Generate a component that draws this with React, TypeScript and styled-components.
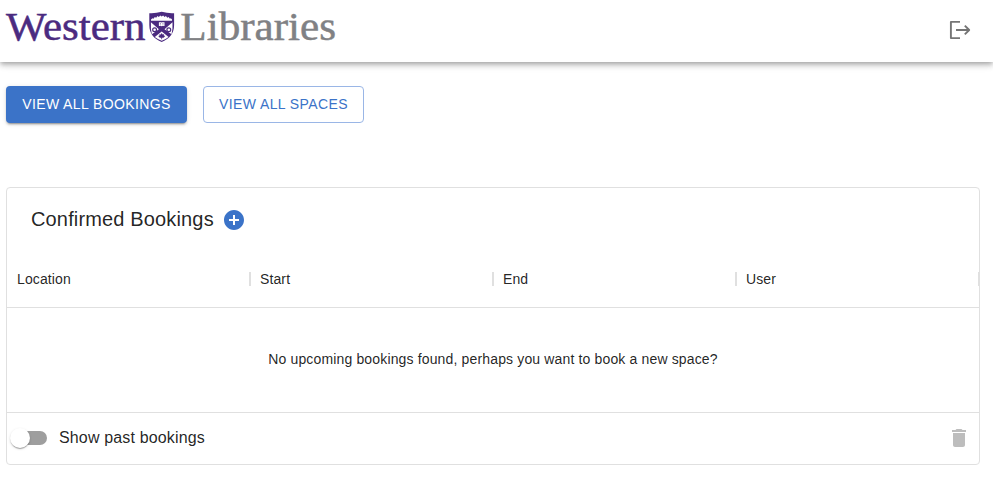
import React from "react";
import styled, { createGlobalStyle } from "styled-components";

const GlobalStyle = createGlobalStyle`
  *, *::before, *::after { box-sizing: border-box; }
  body {
    margin: 0;
    overflow: hidden;
    background: #fff;
    color: rgba(0, 0, 0, 0.87);
    font-family: "Liberation Sans", Arial, sans-serif;
  }
`;

const Header = styled.header`
  display: flex;
  align-items: flex-start;
  justify-content: space-between;
  height: 62px;
  padding-right: 21px;
  background: #fff;
  box-shadow: 0 2px 4px -1px rgba(0, 0, 0, 0.2), 0 4px 5px rgba(0, 0, 0, 0.14),
    0 1px 10px rgba(0, 0, 0, 0.12);
`;

const LogoDrawing = styled.svg`
  display: block;
  font-family: "Liberation Serif", "Times New Roman", serif;
  font-size: 40px;
`;

const IconButton = styled.button`
  display: flex;
  padding: 0;
  border: 0;
  background: none;
  color: #757575;
`;

const LogoutButton = styled(IconButton)`
  margin-top: 18px;
`;

const Main = styled.main`
  padding: 24px 13px 0 6px;
`;

const Actions = styled.div`
  display: flex;
  gap: 16px;
  margin-bottom: 64px;
`;

const Button = styled.button<{ $filled?: boolean; $width: number }>`
  width: ${(p) => p.$width}px;
  height: 37px;
  padding: 0 0 2px;
  border: ${(p) => (p.$filled ? "0" : "1px solid #9ab6e6")};
  border-radius: 4px;
  background: ${(p) => (p.$filled ? "#3b73c8" : "#fff")};
  color: ${(p) => (p.$filled ? "#fff" : "#3b73c8")};
  box-shadow: ${(p) =>
    p.$filled
      ? "0 3px 1px -2px rgba(0,0,0,.2), 0 2px 2px rgba(0,0,0,.14), 0 1px 5px rgba(0,0,0,.12)"
      : "none"};
  font: 14px/24px "Liberation Sans", Arial, sans-serif;
  letter-spacing: 0.4px;
  white-space: nowrap;
`;

const Card = styled.section`
  height: 278px;
  border: 1px solid #e0e0e0;
  border-radius: 4px;
  overflow: hidden;
`;

const CardHead = styled.div`
  display: flex;
  align-items: center;
  gap: 8px;
  height: 64px;
  padding-left: 24px;
`;

const Title = styled.h1`
  margin: 0;
  padding-bottom: 2px;
  font-size: 20px;
  font-weight: 400;
  line-height: 32px;
  letter-spacing: 0.15px;
`;

const AddButton = styled(IconButton)`
  color: #3b73c8;
`;

const Columns = styled.div`
  display: grid;
  grid-template-columns: repeat(4, 243px);
  height: 56px;
  padding-bottom: 2px;
  border-bottom: 1px solid #e0e0e0;
`;

const Column = styled.div`
  display: flex;
  align-items: center;
  justify-content: space-between;
  padding-left: 10px;
  margin-right: -1px;
  font-size: 14px;
  letter-spacing: 0.12px;

  &::after {
    content: "";
    width: 2px;
    height: 14px;
    background: #e0e0e0;
  }
`;

const Empty = styled.div`
  display: flex;
  align-items: center;
  justify-content: center;
  height: 104px;
  padding-bottom: 2px;
  font-size: 14px;
  letter-spacing: 0.15px;
`;

const CardFoot = styled.div`
  display: flex;
  align-items: center;
  height: 52px;
  padding: 0 8px 2px 6px;
  border-top: 1px solid #e0e0e0;
`;

const Toggle = styled.label`
  display: flex;
  align-items: center;
  gap: 12px;
  margin-right: auto;
  font-size: 16px;
  letter-spacing: 0.15px;
`;

const Track = styled.span`
  display: flex;
  align-items: center;
  width: 34px;
  height: 14px;
  border-radius: 7px;
  background: #9e9e9e;
`;

const Thumb = styled.span`
  flex: none;
  width: 20px;
  height: 20px;
  margin-left: -3px;
  border-radius: 50%;
  background: #fff;
  box-shadow: 0 2px 1px -1px rgba(0, 0, 0, 0.2), 0 1px 1px rgba(0, 0, 0, 0.14),
    0 1px 3px rgba(0, 0, 0, 0.12);
`;

const DeleteButton = styled(IconButton)`
  color: #bdbdbd;
`;

function Logo() {
  return (
    <LogoDrawing width="345" height="50" viewBox="0 0 345 50" role="img" aria-label="Western Libraries">
      <text x="6" y="39.8" textLength="139.5" lengthAdjust="spacingAndGlyphs" fill="#4b2b80" stroke="#4b2b80" strokeWidth=".5">
        Western
      </text>
      <path d="M149.3 13.2Q155.5 13.6 161.7 11.8Q168 13.6 174.1 13.2V25C174.1 34 169 39 161.7 42C154.4 39 149.3 34 149.3 25Z" fill="#4b2b80" />
      <path d="M151 19.5l1.5-1.3 1 .6 1.3-1.9 1.3.8 1.4-1.7 1.3.9 1.5-1.5 1.4 1.2 1.4-1.2 1.5 1.5 1.3-.9 1.4 1.7 1.3-.8 1.3 1.9 1-.6 1.1 1.3v1.2H151Z" fill="#fff" />
      <path d="M150.9 22.2L158.9 29.3L151.9 34.2Q150.5 29 150.9 22.2ZM172.5 22.2L164.5 29.3L171.5 34.2Q172.9 29 172.5 22.2Z" fill="#fff" />
      <path d="M161.7 31.6L154.8 37Q158.2 39.6 161.7 40.8Q165.2 39.6 168.6 37Z" fill="#fff" />
      <path d="M158.9 22.3h2.5l.3.4.3-.4h2.5v3.8H162l-.3.4-.3-.4h-2.5Z" fill="#fff" />
      <path d="M159.9 23.5h1.1M159.9 24.9h1.1M162.4 23.5h1.1M162.4 24.9h1.1" stroke="#4b2b80" strokeWidth=".5" />
      <circle cx="154.6" cy="29.8" r="1.9" fill="none" stroke="#4b2b80" strokeWidth="1.2" />
      <circle cx="168.8" cy="29.8" r="1.9" fill="none" stroke="#4b2b80" strokeWidth="1.2" />
      <path d="M161.7 33l.9 1.4 1.5-.2-.3 1.2 1.4.5-1.6 1.8h-1.5v1.5h-.8v-1.5h-1.5l-1.6-1.8 1.4-.5-.3-1.2 1.5.2Z" fill="#4b2b80" />
      <text x="180.3" y="39.8" textLength="155.7" lengthAdjust="spacingAndGlyphs" fill="#808184" stroke="#808184" strokeWidth=".5">
        Libraries
      </text>
    </LogoDrawing>
  );
}

const columns = ["Location", "Start", "End", "User"];

export default function App() {
  return (
    <>
      <GlobalStyle />
      <Header>
        <Logo />
        <LogoutButton aria-label="Log out">
          <svg width="24" height="24" viewBox="0 0 24 24" fill="none" stroke="currentColor" strokeWidth="1.9">
            <path d="M12 3.9H2.9V20.1H12M8 12H21.5M16.8 7.6L21.2 12L16.8 16.4" strokeLinejoin="round" />
          </svg>
        </LogoutButton>
      </Header>
      <Main>
        <Actions>
          <Button $filled $width={181}>VIEW ALL BOOKINGS</Button>
          <Button $width={161}>VIEW ALL SPACES</Button>
        </Actions>
        <Card>
          <CardHead>
            <Title>Confirmed Bookings</Title>
            <AddButton aria-label="Add booking">
              <svg width="24" height="24" viewBox="0 0 24 24" fill="currentColor">
                <path d="M12 2C6.48 2 2 6.48 2 12s4.48 10 10 10 10-4.48 10-10S17.52 2 12 2zm5 11h-4v4h-2v-4H7v-2h4V7h2v4h4v2z" />
              </svg>
            </AddButton>
          </CardHead>
          <Columns>
            {columns.map((name) => (
              <Column key={name}>{name}</Column>
            ))}
          </Columns>
          <Empty>No upcoming bookings found, perhaps you want to book a new space?</Empty>
          <CardFoot>
            <Toggle>
              <Track>
                <Thumb />
              </Track>
              Show past bookings
            </Toggle>
            <DeleteButton aria-label="Delete">
              <svg width="24" height="24" viewBox="0 0 24 24" fill="currentColor">
                <path d="M6 19c0 1.1.9 2 2 2h8c1.1 0 2-.9 2-2V7H6v12zM19 4h-3.5l-1-1h-5l-1 1H5v2h14V4z" />
              </svg>
            </DeleteButton>
          </CardFoot>
        </Card>
      </Main>
    </>
  );
}
